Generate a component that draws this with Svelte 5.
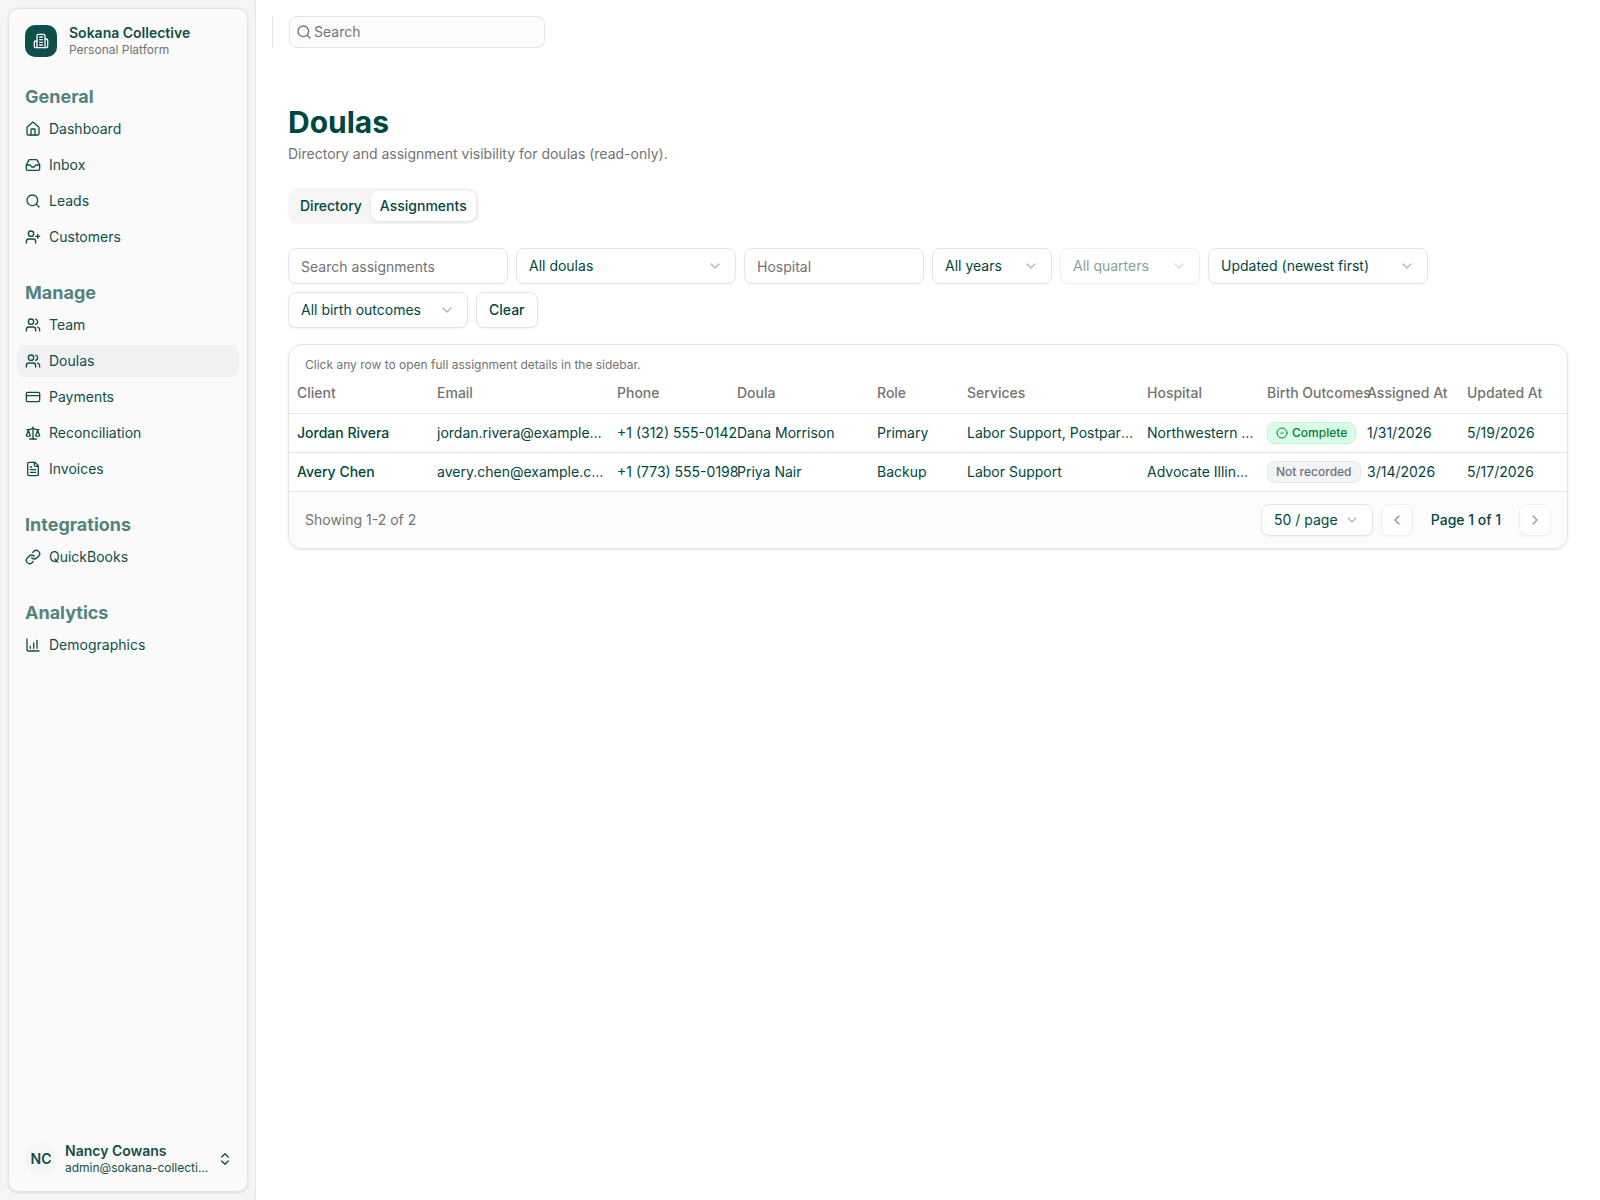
<script>
    const icons = {
        building: '<path d="M6 22V4a2 2 0 0 1 2-2h8a2 2 0 0 1 2 2v18Z"/><path d="M6 12H4a2 2 0 0 0-2 2v6a2 2 0 0 0 2 2h2"/><path d="M18 9h2a2 2 0 0 1 2 2v9a2 2 0 0 1-2 2h-2"/><path d="M10 6h4"/><path d="M10 10h4"/><path d="M10 14h4"/><path d="M10 18h4"/>',
        home: '<path d="M15 21v-8a1 1 0 0 0-1-1h-4a1 1 0 0 0-1 1v8"/><path d="M3 10a2 2 0 0 1 .709-1.528l7-5.999a2 2 0 0 1 2.582 0l7 5.999A2 2 0 0 1 21 10v9a2 2 0 0 1-2 2H5a2 2 0 0 1-2-2z"/>',
        inbox: '<polyline points="22 12 16 12 14 15 10 15 8 12 2 12"/><path d="M5.45 5.11 2 12v6a2 2 0 0 0 2 2h16a2 2 0 0 0 2-2v-6l-3.45-6.89A2 2 0 0 0 16.76 4H7.24a2 2 0 0 0-1.79 1.11z"/>',
        search: '<circle cx="11" cy="11" r="8"/><path d="m21 21-4.3-4.3"/>',
        userAdd: '<path d="M16 21v-2a4 4 0 0 0-4-4H6a4 4 0 0 0-4 4v2"/><circle cx="9" cy="7" r="4"/><path d="M19 8v6"/><path d="M22 11h-6"/>',
        users: '<path d="M16 21v-2a4 4 0 0 0-4-4H6a4 4 0 0 0-4 4v2"/><circle cx="9" cy="7" r="4"/><path d="M22 21v-2a4 4 0 0 0-3-3.87"/><path d="M16 3.13a4 4 0 0 1 0 7.75"/>',
        card: '<rect width="20" height="14" x="2" y="5" rx="2"/><path d="M2 10h20"/>',
        scale: '<path d="m16 16 3-8 3 8c-.87.65-1.92 1-3 1s-2.13-.35-3-1Z"/><path d="m2 16 3-8 3 8c-.87.65-1.92 1-3 1s-2.13-.35-3-1Z"/><path d="M7 21h10"/><path d="M12 3v18"/><path d="M3 7h2c2 0 5-1 7-2 2 1 5 2 7 2h2"/>',
        file: '<path d="M15 2H6a2 2 0 0 0-2 2v16a2 2 0 0 0 2 2h12a2 2 0 0 0 2-2V7Z"/><path d="M14 2v4a2 2 0 0 0 2 2h4"/><path d="M10 9H8"/><path d="M16 13H8"/><path d="M16 17H8"/>',
        link: '<path d="M10 13a5 5 0 0 0 7.54.54l3-3a5 5 0 0 0-7.07-7.07l-1.72 1.71"/><path d="M14 11a5 5 0 0 0-7.54-.54l-3 3a5 5 0 0 0 7.07 7.07l1.71-1.71"/>',
        chart: '<path d="M3 3v16a2 2 0 0 0 2 2h16"/><path d="M18 17V5"/><path d="M13 17V9"/><path d="M8 17v-3"/>',
        upDown: '<path d="m7 15 5 5 5-5"/><path d="m7 9 5-5 5 5"/>',
        down: '<path d="m6 9 6 6 6-6"/>',
        left: '<path d="m15 18-6-6 6-6"/>',
        right: '<path d="m9 18 6-6-6-6"/>',
        check: '<circle cx="12" cy="12" r="10"/><path d="m9 12 2 2 4-4"/>'
    };

    const groups = [
        { title: "General", items: [
            { label: "Dashboard", icon: "home" },
            { label: "Inbox", icon: "inbox" },
            { label: "Leads", icon: "search" },
            { label: "Customers", icon: "userAdd" }
        ]},
        { title: "Manage", items: [
            { label: "Team", icon: "users" },
            { label: "Doulas", icon: "users" },
            { label: "Payments", icon: "card" },
            { label: "Reconciliation", icon: "scale" },
            { label: "Invoices", icon: "file" }
        ]},
        { title: "Integrations", items: [{ label: "QuickBooks", icon: "link" }] },
        { title: "Analytics", items: [{ label: "Demographics", icon: "chart" }] }
    ];

    const columns = [
        { label: "Client", size: "w140" },
        { label: "Email", size: "w180" },
        { label: "Phone", size: "w120" },
        { label: "Doula", size: "w140" },
        { label: "Role", size: "w90" },
        { label: "Services", size: "w180" },
        { label: "Hospital", size: "w120" },
        { label: "Birth Outcomes", size: "w100" },
        { label: "Assigned At", size: "w100" },
        { label: "Updated At", size: "" }
    ];

    const assignments = [
        {
            client: "Jordan Rivera", email: "jordan.rivera@example.com", phone: "+1 (312) 555-0142",
            doula: "Dana Morrison", role: "Primary", services: "Labor Support, Postpartum Support",
            hospital: "Northwestern Memorial", complete: true, assigned: "1/31/2026", updated: "5/19/2026"
        },
        {
            client: "Avery Chen", email: "avery.chen@example.com", phone: "+1 (773) 555-0198",
            doula: "Priya Nair", role: "Backup", services: "Labor Support",
            hospital: "Advocate Illinois Masonic", complete: false, assigned: "3/14/2026", updated: "5/17/2026"
        }
    ];

    let active = $state("Doulas");
    let tab = $state("Assignments");
    let search = $state("");
    let hospital = $state("");

    function clearFilters() {
        search = "";
        hospital = "";
    }
</script>

{#snippet icon(name)}
    <svg class="icon" viewBox="0 0 24 24" aria-hidden="true">{@html icons[name]}</svg>
{/snippet}

{#snippet dropdown(label, value, size, disabled)}
    <div class="select {size}" class:disabled>
        <select aria-label={label} {disabled}>
            <option>{value}</option>
        </select>
        {@render icon("down")}
    </div>
{/snippet}

<div class="layout">
    <aside>
        <div class="sidebar">
            <div class="brand">
                <div class="logo">{@render icon("building")}</div>
                <div class="two-lines">
                    <strong>Sokana Collective</strong>
                    <span class="muted">Personal Platform</span>
                </div>
            </div>
            <nav>
                {#each groups as group}
                    <section>
                        <h2>{group.title}</h2>
                        <ul>
                            {#each group.items as item}
                                <li>
                                    <a href="#{item.label.toLowerCase()}" class:active={item.label === active} onclick={() => (active = item.label)}>
                                        {@render icon(item.icon)}
                                        {item.label}
                                    </a>
                                </li>
                            {/each}
                        </ul>
                    </section>
                {/each}
            </nav>
            <button class="user">
                <span class="avatar">NC</span>
                <span class="two-lines">
                    <strong>Nancy Cowans</strong>
                    <span>admin@sokana-collective.com</span>
                </span>
                {@render icon("upDown")}
            </button>
        </div>
    </aside>

    <div class="page">
        <header>
            <div class="separator"></div>
            <label class="search">
                {@render icon("search")}
                <input type="text" placeholder="Search" aria-label="Search">
            </label>
        </header>

        <main>
            <h1>Doulas</h1>
            <p class="subtitle">Directory and assignment visibility for doulas (read-only).</p>

            <div class="tabs" role="tablist">
                {#each ["Directory", "Assignments"] as name}
                    <button role="tab" aria-selected={tab === name} class:selected={tab === name} onclick={() => (tab = name)}>{name}</button>
                {/each}
            </div>

            <div class="filters">
                <input class="w220" type="text" placeholder="Search assignments" aria-label="Search assignments" bind:value={search}>
                {@render dropdown("Doula", "All doulas", "w220", false)}
                <input class="w180" type="text" placeholder="Hospital" aria-label="Hospital" bind:value={hospital}>
                {@render dropdown("Year", "All years", "w120", false)}
                {@render dropdown("Quarter", "All quarters", "w140", true)}
                {@render dropdown("Sort", "Updated (newest first)", "w220", false)}
                {@render dropdown("Birth outcome", "All birth outcomes", "w180", false)}
                <button class="clear" onclick={clearFilters}>Clear</button>
            </div>

            <div class="table-card">
                <p class="hint">Click any row to open full assignment details in the sidebar.</p>
                <table>
                    <thead>
                        <tr>
                            {#each columns as column}
                                <th class={column.size}>{column.label}</th>
                            {/each}
                        </tr>
                    </thead>
                    <tbody>
                        {#each assignments as row}
                            <tr>
                                <td class="client">{row.client}</td>
                                <td><div class="truncate">{row.email}</div></td>
                                <td>{row.phone}</td>
                                <td>{row.doula}</td>
                                <td>{row.role}</td>
                                <td><div class="truncate">{row.services}</div></td>
                                <td><div class="truncate">{row.hospital}</div></td>
                                <td>
                                    {#if row.complete}
                                        <span class="badge complete">{@render icon("check")}Complete</span>
                                    {:else}
                                        <span class="badge">Not recorded</span>
                                    {/if}
                                </td>
                                <td>{row.assigned}</td>
                                <td>{row.updated}</td>
                            </tr>
                        {/each}
                    </tbody>
                </table>
                <div class="table-footer">
                    <span class="muted">Showing 1-2 of 2</span>
                    <div class="pager">
                        {@render dropdown("Rows per page", "50 / page", "w112", false)}
                        <button class="step" aria-label="Previous page" disabled>{@render icon("left")}</button>
                        <span class="page-count">Page 1 of 1</span>
                        <button class="step" aria-label="Next page" disabled>{@render icon("right")}</button>
                    </div>
                </div>
            </div>
        </main>
    </div>
</div>

<style>
    :global(body){
        background-color: #fff;
    }
    .layout{
        --text: #004742;
        --muted: #737373;
        --border: #e5e5e5;
        --shadow: 0 1px 2px rgba(0, 0, 0, 0.05);
        display: flex;
        min-height: 100vh;
        font-family: Inter, "Liberation Sans", sans-serif;
        font-size: 14px;
        line-height: 20px;
        color: var(--text);
    }
    .layout, .layout :global(*){
        box-sizing: border-box;
    }
    button, input, select{
        font: inherit;
        color: inherit;
        margin: 0;
    }
    h1, h2, p, ul{
        margin: 0;
        padding: 0;
    }
    .icon{
        width: 16px;
        height: 16px;
        flex-shrink: 0;
        fill: none;
        stroke: currentColor;
        stroke-width: 2;
        stroke-linecap: round;
        stroke-linejoin: round;
    }
    .muted{
        color: var(--muted);
    }

    /* sidebar */
    aside{
        display: flex;
        width: 256px;
        flex-shrink: 0;
        padding: 8px 7px 8px 8px;
        background-color: #f5f5f5;
        border-right: 1px solid var(--border);
    }
    .sidebar{
        display: flex;
        flex-direction: column;
        width: 100%;
        padding: 8px;
        background-color: #fafafa;
        border: 1px solid var(--border);
        border-radius: 10px;
        box-shadow: 0 1px 3px rgba(0, 0, 0, 0.1);
        color: #0f4f4a;
    }
    .brand{
        display: flex;
        align-items: center;
        gap: 12px;
        height: 48px;
        padding: 8px;
    }
    .logo{
        display: flex;
        align-items: center;
        justify-content: center;
        width: 32px;
        height: 32px;
        border-radius: 10px;
        background-color: #0f4f4a;
        color: #fafafa;
    }
    .two-lines{
        display: flex;
        flex-direction: column;
        flex: 1;
        min-width: 0;
        font-size: 12px;
        line-height: 16px;
        text-align: left;
    }
    .two-lines strong{
        font-size: 14px;
        font-weight: 600;
        line-height: 18px;
    }
    .two-lines span{
        overflow: hidden;
        text-overflow: ellipsis;
        white-space: nowrap;
    }
    nav{
        display: flex;
        flex-direction: column;
        flex: 1;
        gap: 24px;
        padding-top: 16px;
    }
    h2{
        padding: 0 8px;
        font-size: 18px;
        font-weight: 700;
        line-height: 32px;
        color: #53837f;
    }
    ul{
        display: flex;
        flex-direction: column;
        gap: 4px;
        list-style: none;
    }
    nav a{
        display: flex;
        align-items: center;
        gap: 8px;
        height: 32px;
        padding: 0 8px;
        border-radius: 8px;
        color: inherit;
        text-decoration: none;
    }
    nav a.active{
        background-color: #f0f1f3;
    }
    .user{
        display: flex;
        align-items: center;
        gap: 8px;
        height: 48px;
        padding: 8px 6px 8px 8px;
        border: none;
        background: none;
    }
    .avatar{
        width: 32px;
        border-radius: 50%;
        background-color: #f5f5f5;
        line-height: 32px;
        font-weight: 600;
        text-align: center;
    }

    /* top bar */
    .page{
        flex: 1;
        min-width: 0;
    }
    header{
        display: flex;
        gap: 16px;
        padding: 16px;
    }
    .separator{
        width: 1px;
        background-color: var(--border);
    }
    .search{
        display: flex;
        align-items: center;
        gap: 2px;
        width: 256px;
        height: 32px;
        padding: 0 6px;
        border: 1px solid var(--border);
        border-radius: 8px;
        background-color: #fcfcfc;
        color: var(--muted);
    }
    .search input{
        flex: 1;
        min-width: 0;
        padding: 0;
        border: none;
        outline: none;
        background: none;
    }
    input::placeholder{
        color: var(--muted);
        opacity: 1;
    }

    main{
        padding: 40px 32px 32px;
    }
    h1{
        font-size: 30px;
        font-weight: 700;
        line-height: 36px;
    }
    .subtitle{
        margin-top: 4px;
        color: var(--muted);
    }
    .tabs{
        display: inline-flex;
        height: 36px;
        margin-top: 24px;
        padding: 3px;
        border-radius: 10px;
        background-color: #f5f5f5;
    }
    .tabs button{
        padding: 0 9px;
        border: none;
        border-radius: 8px;
        background: none;
        font-weight: 500;
    }
    .tabs button.selected{
        background-color: #fff;
        box-shadow: 0 1px 3px rgba(0, 0, 0, 0.1);
    }

    /* filters */
    .filters{
        display: flex;
        flex-wrap: wrap;
        gap: 8px;
        margin: 24px 0 16px;
    }
    .filters input, .select select, .clear, .step{
        height: 36px;
        padding: 0 12px;
        border: 1px solid var(--border);
        border-radius: 8px;
        background-color: #fff;
        box-shadow: var(--shadow);
    }
    .select{
        display: grid;
        align-items: center;
    }
    .select select{
        grid-area: 1 / 1;
        width: 100%;
        appearance: none;
        opacity: 1;
    }
    .select .icon{
        grid-area: 1 / 1;
        justify-self: end;
        margin-right: 13px;
        color: #b5b5b5;
        pointer-events: none;
    }
    .select.disabled{
        opacity: 0.5;
    }
    .clear{
        font-weight: 500;
    }
    .w90{ width: 90px; }
    .w100{ width: 100px; }
    .w112{ width: 112px; }
    .w120{ width: 120px; }
    .w140{ width: 140px; }
    .w180{ width: 180px; }
    .w220{ width: 220px; }

    /* table */
    .table-card{
        overflow: hidden;
        border: 1px solid var(--border);
        border-radius: 14px;
        box-shadow: 0 1px 3px rgba(0, 0, 0, 0.1);
    }
    .hint{
        padding: 12px 16px 0;
        font-size: 12px;
        line-height: 16px;
        color: var(--muted);
    }
    table{
        width: 100%;
        table-layout: fixed;
        border-collapse: collapse;
    }
    th, td{
        height: 39px;
        padding: 0 4px 0 8px;
        border-bottom: 1px solid var(--border);
        text-align: left;
        white-space: nowrap;
    }
    th{
        height: 40px;
        font-weight: 500;
        color: var(--muted);
    }
    .client{
        font-weight: 500;
    }
    .truncate{
        overflow: hidden;
        text-overflow: ellipsis;
    }
    .badge{
        display: inline-flex;
        align-items: center;
        gap: 4px;
        height: 22px;
        padding: 0 8px;
        border: 1px solid #e5e7eb;
        border-radius: 8px;
        background-color: #f3f4f6;
        color: #6a7282;
        font-size: 12px;
        font-weight: 500;
        line-height: 16px;
        vertical-align: middle;
    }
    .badge.complete{
        border-color: #b9f8cf;
        background-color: #dcfce7;
        color: #008236;
    }
    .badge .icon{
        width: 12px;
        height: 12px;
    }
    .table-footer{
        display: flex;
        align-items: center;
        justify-content: space-between;
        padding: 12px 16px;
        background-color: #fcfcfc;
    }
    .pager{
        display: flex;
        align-items: center;
        gap: 8px;
    }
    .pager select, .step{
        height: 32px;
    }
    .step{
        display: flex;
        align-items: center;
        justify-content: center;
        width: 32px;
        padding: 0;
        opacity: 0.5;
    }
    .page-count{
        min-width: 90px;
        font-weight: 500;
        text-align: center;
    }
</style>
